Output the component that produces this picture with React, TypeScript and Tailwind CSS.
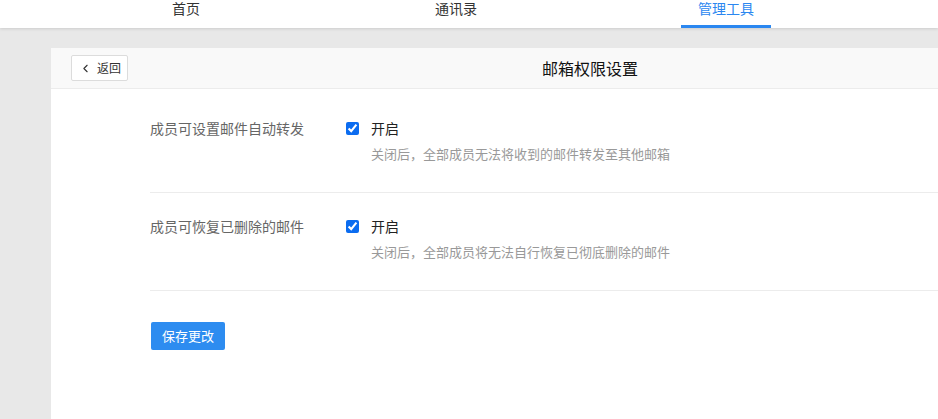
import { ChevronLeft } from "lucide-react";

const font = { fontFamily: '"Microsoft YaHei", "Noto Sans CJK SC", sans-serif' };

const settings = [
  { label: "成员可设置邮件自动转发", desc: "关闭后，全部成员无法将收到的邮件转发至其他邮箱" },
  { label: "成员可恢复已删除的邮件", desc: "关闭后，全部成员将无法自行恢复已彻底删除的邮件" },
];

export default function App() {
  return (
    <div className="h-[419px] w-[938px] overflow-hidden bg-[#e8e8e8]" style={font}>
      {/* top nav */}
      <nav className="relative z-10 flex h-[28px] bg-white shadow-[0_1px_3px_rgba(0,0,0,0.12)]">
        <div className="flex w-[1100px] shrink-0 pl-[51px]">
          {["首页", "通讯录", "管理工具"].map((t, i) => (
            <div key={t} className="flex w-[270px] justify-center">
              <span
                className={`-mt-[2px] flex h-[30px] w-[90px] justify-center border-b-[3px] text-[14px] leading-[20px] ${
                  i === 2 ? "border-[#2b87f0] text-[#2b87f0]" : "border-transparent text-[#333]"
                }`}
              >
                {t}
              </span>
            </div>
          ))}
        </div>
      </nav>

      {/* card */}
      <div className="ml-[51px] mt-[20px] h-[400px] w-[1078px] rounded-tl-[3px] bg-white">
        <header className="relative flex h-[41px] items-center justify-center border-b border-[#ececec] bg-[#f9f9f9]">
          <button className="absolute left-[20px] top-[7px] flex h-[26px] w-[57px] items-center gap-[5px] rounded-[2px] border border-[#dcdcdc] bg-white pl-[7px] text-[12px] text-[#333]">
            <ChevronLeft size={13} strokeWidth={2} />
            返回
          </button>
          <h1 className="text-[16px] text-[#111]">邮箱权限设置</h1>
        </header>

        <div className="pl-[99px] pt-[24px]">
          {settings.map((s) => (
            <div key={s.label} className="flex border-b border-[#ececec] pb-[29px] pt-[4px] [&+&]:pt-[22px]">
              <div className="w-[196px] text-[14px] leading-[22px] text-[#666]">{s.label}</div>
              <div>
                <label className="flex items-center gap-[12px] text-[14px] leading-[22px] text-[#222]">
                  <input type="checkbox" defaultChecked className="m-0 h-[13px] w-[13px] accent-[#0b6cf0]" />
                  开启
                </label>
                <p className="mt-[6px] pl-[25px] text-[13px] leading-[18px] text-[#999]">{s.desc}</p>
              </div>
            </div>
          ))}
          <button className="ml-[1px] mt-[31px] h-[28px] w-[74px] rounded-[2px] bg-[#2d8cf0] text-[13px] text-white">
            保存更改
          </button>
        </div>
      </div>
    </div>
  );
}
